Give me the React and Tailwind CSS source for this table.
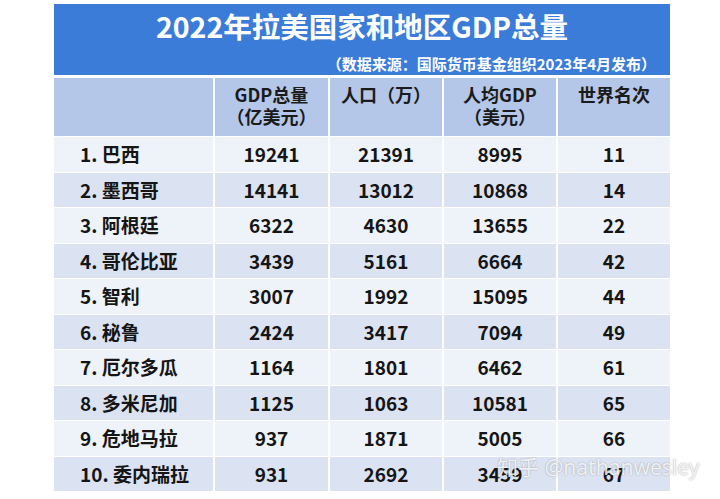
import React from 'react';

const rows = [
  ['1. 巴西', '19241', '21391', '8995', '11'],
  ['2. 墨西哥', '14141', '13012', '10868', '14'],
  ['3. 阿根廷', '6322', '4630', '13655', '22'],
  ['4. 哥伦比亚', '3439', '5161', '6664', '42'],
  ['5. 智利', '3007', '1992', '15095', '44'],
  ['6. 秘鲁', '2424', '3417', '7094', '49'],
  ['7. 厄尔多瓜', '1164', '1801', '6462', '61'],
  ['8. 多米尼加', '1125', '1063', '10581', '65'],
  ['9. 危地马拉', '937', '1871', '5005', '66'],
  ['10. 委内瑞拉', '931', '2692', '3459', '67'],
];

const font = { fontFamily: "'Noto Sans CJK SC', 'Noto Sans', sans-serif" };

export default function App() {
  return (
    <div className="relative w-[720px] h-[499px] bg-white overflow-hidden" style={font}>
      <div className="ml-[54px] pt-[4px] w-[616px] flex flex-col">
        {/* ── Title bar ── */}
        <div className="h-[71px] bg-[#3b7cd9] flex flex-col text-white font-bold">
          <div className="pt-[4px] text-center text-[28.5px] leading-[36px]">
            2022年拉美国家和地区GDP总量
          </div>
          <div className="mt-[10px] pr-[14px] text-right text-[15px] leading-[20px]">
            （数据来源：国际货币基金组织2023年4月发布）
          </div>
        </div>

        {/* ── Header ── */}
        <div className="mt-[3px] grid grid-cols-[159px_113px_112px_112px_112px] gap-x-[2px] h-[58px] text-[18px] leading-[22px] font-bold text-[#1b1b1b]">
          <div className="bg-[#b4c7e8]" />
          <div className="bg-[#b4c7e8] pt-[5px] text-center">GDP总量<br />（亿美元）</div>
          <div className="bg-[#b4c7e8] pt-[5px] text-center">人口（万）</div>
          <div className="bg-[#b4c7e8] pt-[5px] text-center">人均GDP<br />（美元）</div>
          <div className="bg-[#b4c7e8] pt-[5px] text-center">世界名次</div>
        </div>

        {/* ── Rows ── */}
        <div className="mt-[1px] flex flex-col gap-y-[1px]">
          {rows.map((r, i) => {
            const bg = i % 2 === 0 ? 'bg-[#eef2f9]' : 'bg-[#dbe3f2]';
            return (
              <div key={i}
                className="grid grid-cols-[159px_113px_112px_112px_112px] gap-x-[2px] h-[34.5px] text-[19px] font-bold text-[#151515]">
                <div className={`flex items-center pl-[26px] ${bg}`}>{r[0]}</div>
                {r.slice(1).map((v, j) => (
                  <div key={j} className={`flex items-center justify-center ${bg}`}>{v}</div>
                ))}
              </div>
            );
          })}
        </div>
      </div>

      {/* watermark */}
      <div className="absolute left-[497px] top-[452px] text-[21px] leading-[30px] text-white/85 [text-shadow:0_0_1.5px_rgba(80,80,80,0.6)]"
        style={{ fontFamily: "'Noto Sans', 'Noto Sans CJK SC', sans-serif" }}>
        知乎 @nathanwesley
      </div>
    </div>
  );
}
